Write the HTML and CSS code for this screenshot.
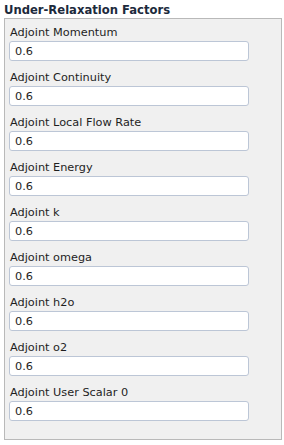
FILE: index.html
```html
<!DOCTYPE html>
<html lang="en">
<head>
    <meta charset="UTF-8">
    <title>Under-Relaxation Factors</title>
    <link rel="stylesheet" href="styles.css">
</head>
<body>
    <div class="group">
        <div class="group-title">Under-Relaxation Factors</div>
        <div class="group-box">
            <div class="field">
                <label>Adjoint Momentum</label>
                <input type="text" value="0.6">
            </div>
            <div class="field">
                <label>Adjoint Continuity</label>
                <input type="text" value="0.6">
            </div>
            <div class="field">
                <label>Adjoint Local Flow Rate</label>
                <input type="text" value="0.6">
            </div>
            <div class="field">
                <label>Adjoint Energy</label>
                <input type="text" value="0.6">
            </div>
            <div class="field">
                <label>Adjoint k</label>
                <input type="text" value="0.6">
            </div>
            <div class="field">
                <label>Adjoint omega</label>
                <input type="text" value="0.6">
            </div>
            <div class="field">
                <label>Adjoint h2o</label>
                <input type="text" value="0.6">
            </div>
            <div class="field">
                <label>Adjoint o2</label>
                <input type="text" value="0.6">
            </div>
            <div class="field">
                <label>Adjoint User Scalar 0</label>
                <input type="text" value="0.6">
            </div>
        </div>
    </div>
</body>
</html>
```

FILE: styles.css
```css
body {
    margin: 0;
    background: #ffffff;
    font-family: "DejaVu Sans", Verdana, sans-serif;
    font-size: 11.3px;
    color: #1e1e1e;
}
.group {
    padding: 3px 2px 0 4px;
}
.group-title {
    font-weight: bold;
    font-size: 11.6px;
    color: #1c2a3c;
    height: 15px;
    line-height: 15px;
}
.group-box {
    border: 1px solid #b9b9b9;
    background: #f0f0f0;
    padding: 4px 4px 18px 4px;
    display: flex;
    flex-direction: column;
    gap: 7px;
}
.field {
    display: flex;
    flex-direction: column;
}
.field label {
    height: 18px;
    line-height: 19px;
    padding-left: 1px;
}
.field input {
    width: 240px;
    height: 20px;
    box-sizing: border-box;
    margin: 0;
    border: 1px solid #bcc6d6;
    border-radius: 3px;
    background: #ffffff;
    font-family: "DejaVu Sans", Verdana, sans-serif;
    font-size: 11.3px;
    color: #1e1e1e;
    padding: 0 5px;
}
```
